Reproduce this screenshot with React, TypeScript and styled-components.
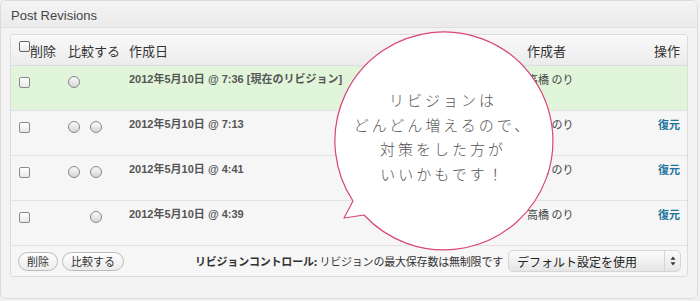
import styled, { createGlobalStyle } from 'styled-components';

const GlobalStyle = createGlobalStyle`
  html, body {
    margin: 0;
    padding: 0;
    background: #f1f1f1;
  }
  body {
    font-family: "Noto Sans CJK JP", "Liberation Sans", sans-serif;
    color: #333;
  }
`;

type Revision = {
  date: string;
  author: string;
  current?: boolean;
  left: boolean;
  right: boolean;
};

const revisions: Revision[] = [
  { date: '2012年5月10日 @ 7:36 [現在のリビジョン]', author: '高橋 のり', current: true, left: true, right: false },
  { date: '2012年5月10日 @ 7:13', author: '高橋 のり', left: true, right: true },
  { date: '2012年5月10日 @ 4:41', author: '高橋 のり', left: true, right: true },
  { date: '2012年5月10日 @ 4:39', author: '高橋 のり', left: false, right: true },
];

const App = () => {
  return (
    <>
      <GlobalStyle />
      <Panel>
        <PanelTitle>Post Revisions</PanelTitle>
        <Table>
          <HeadRow>
            <Cell>
              <HeadCheck />
              削除
            </Cell>
            <Cell>比較する</Cell>
            <Cell>作成日</Cell>
            <Cell>作成者</Cell>
            <Cell $right>操作</Cell>
          </HeadRow>
          {revisions.map((r) => (
            <Row key={r.date} $current={r.current}>
              <Cell>
                <Check />
              </Cell>
              <Cell>
                <Radios>
                  <Radio $hidden={!r.left} />
                  <Radio $hidden={!r.right} />
                </Radios>
              </Cell>
              <DateCell>{r.date}</DateCell>
              <AuthorCell>{r.author}</AuthorCell>
              <Cell $right>{!r.current && <Restore>復元</Restore>}</Cell>
            </Row>
          ))}
          <Footer>
            <Buttons>
              <PillButton>削除</PillButton>
              <PillButton>比較する</PillButton>
            </Buttons>
            <Control>
              <b>リビジョンコントロール:</b> リビジョンの最大保存数は無制限です
            </Control>
            <Select>
              <span>デフォルト設定を使用</span>
              <SelectArrows>
                <svg width="6" height="10" viewBox="0 0 6 10">
                  <path d="M3 0.5 L5.5 3.8 H0.5 Z" fill="#333" />
                  <path d="M3 9.5 L5.5 6.2 H0.5 Z" fill="#333" />
                </svg>
              </SelectArrows>
            </Select>
          </Footer>
        </Table>
        <Bubble>
          <svg width="240" height="240" viewBox="0 0 240 240">
            <path
              d="M32 178 A109 109 0 1 1 43 192 L23 195 Z"
              fill="#fff"
              stroke="#d9457a"
              strokeWidth="1.2"
              strokeLinejoin="round"
            />
          </svg>
          <BubbleText>
            リビジョンは
            <br />
            どんどん増えるので、
            <br />
            対策をした方が
            <br />
            いいかもです！
          </BubbleText>
        </Bubble>
      </Panel>
    </>
  );
};

const Panel = styled.div`
  position: relative;
  width: 698px;
  height: 299px;
  border: 1px solid #dcdcdc;
  border-radius: 6px;
  background: #f3f3f3;
  box-sizing: border-box;
  overflow: hidden;
`;

const PanelTitle = styled.div`
  height: 27px;
  line-height: 29px;
  padding-left: 10px;
  font-family: "Liberation Sans", Arial, sans-serif;
  font-size: 13px;
  color: #444;
  background: linear-gradient(#f4f4f4, #ebebeb);
  border-bottom: 1px solid #e0e0e0;
  box-sizing: border-box;
`;

const Table = styled.div`
  margin: 6px 9px 0 9px;
  border: 1px solid #dcdcdc;
  border-radius: 3px;
  background: #f6f6f6;
  overflow: hidden;
`;

const gridCols = `
  display: grid;
  grid-template-columns: 50px 61px 398px 1fr 60px;
  padding: 0 7px;
`;

const HeadRow = styled.div`
  ${gridCols}
  height: 30px;
  align-items: center;
  font-size: 13px;
  color: #333;
  background: linear-gradient(#f9f9f9, #ececec);
  border-bottom: 1px solid #dcdcdc;
`;

const Row = styled.div<{ $current?: boolean }>`
  ${gridCols}
  height: 45px;
  padding-top: 6px;
  box-sizing: border-box;
  font-size: 11px;
  background: ${(p) => (p.$current ? '#e1f5da' : '#f6f6f6')};
  border-bottom: 1px solid #e2e2e2;
`;

const Cell = styled.div<{ $right?: boolean }>`
  position: relative;
  display: flex;
  align-items: flex-start;
  justify-content: ${(p) => (p.$right ? 'flex-end' : 'flex-start')};
  white-space: nowrap;
`;

const DateCell = styled(Cell)`
  font-family: "Liberation Sans", "Noto Sans CJK JP", sans-serif;
  font-weight: bold;
  color: #555;
  line-height: 14px;
`;

const AuthorCell = styled(Cell)`
  color: #444;
  line-height: 14px;
`;

const Restore = styled.span`
  font-weight: bold;
  color: #21759b;
  line-height: 14px;
`;

const Check = styled.span`
  display: block;
  width: 9px;
  height: 9px;
  margin: 5px 0 0 1px;
  border: 1px solid #8a8a8a;
  border-radius: 2px;
  background: linear-gradient(#fff, #e8e8e8);
`;

const HeadCheck = styled(Check)`
  margin: 0 0 0 1px;
  border-color: #666;
`;

const Radios = styled.div`
  display: flex;
  gap: 10px;
  margin-top: 4px;
`;

const Radio = styled.span<{ $hidden?: boolean }>`
  display: block;
  width: 10px;
  height: 10px;
  border: 1px solid #888;
  border-radius: 50%;
  background: linear-gradient(#fafafa, #d6d6d6);
  visibility: ${(p) => (p.$hidden ? 'hidden' : 'visible')};
`;

const Footer = styled.div`
  display: flex;
  align-items: center;
  height: 30px;
  padding: 0 6px 0 7px;
  font-size: 11px;
`;

const Buttons = styled.div`
  display: flex;
  gap: 4px;
`;

const PillButton = styled.button`
  height: 19px;
  padding: 0 8px;
  font-family: inherit;
  font-size: 11px;
  color: #333;
  line-height: 17px;
  border: 1px solid #bbb;
  border-radius: 10px;
  background: linear-gradient(#fefefe, #ececec);
`;

const Control = styled.div`
  margin-left: auto;
  color: #333;
  white-space: nowrap;
  letter-spacing: -0.2px;
  b {
    font-weight: bold;
  }
`;

const Select = styled.div`
  display: flex;
  align-items: center;
  width: 173px;
  height: 22px;
  margin-left: 5px;
  padding-left: 8px;
  box-sizing: border-box;
  font-size: 12px;
  color: #222;
  border: 1px solid #d6d6d6;
  border-radius: 5px;
  background: linear-gradient(#fbfbfb, #e6e6e6);
  span {
    flex: 1;
  }
`;

const SelectArrows = styled.div`
  display: flex;
  align-items: center;
  justify-content: center;
  width: 15px;
  height: 100%;
  border-left: 1px solid #d6d6d6;
`;

const Bubble = styled.div`
  position: absolute;
  left: 320px;
  top: 22px;
  width: 240px;
  height: 240px;
  svg {
    position: absolute;
    left: 0;
    top: 0;
  }
`;

const BubbleText = styled.div`
  position: absolute;
  left: 12px;
  top: 65px;
  width: 220px;
  text-align: center;
  font-size: 15px;
  line-height: 24.5px;
  letter-spacing: 3px;
  color: #555;
  font-weight: 300;
`;

export default App;
